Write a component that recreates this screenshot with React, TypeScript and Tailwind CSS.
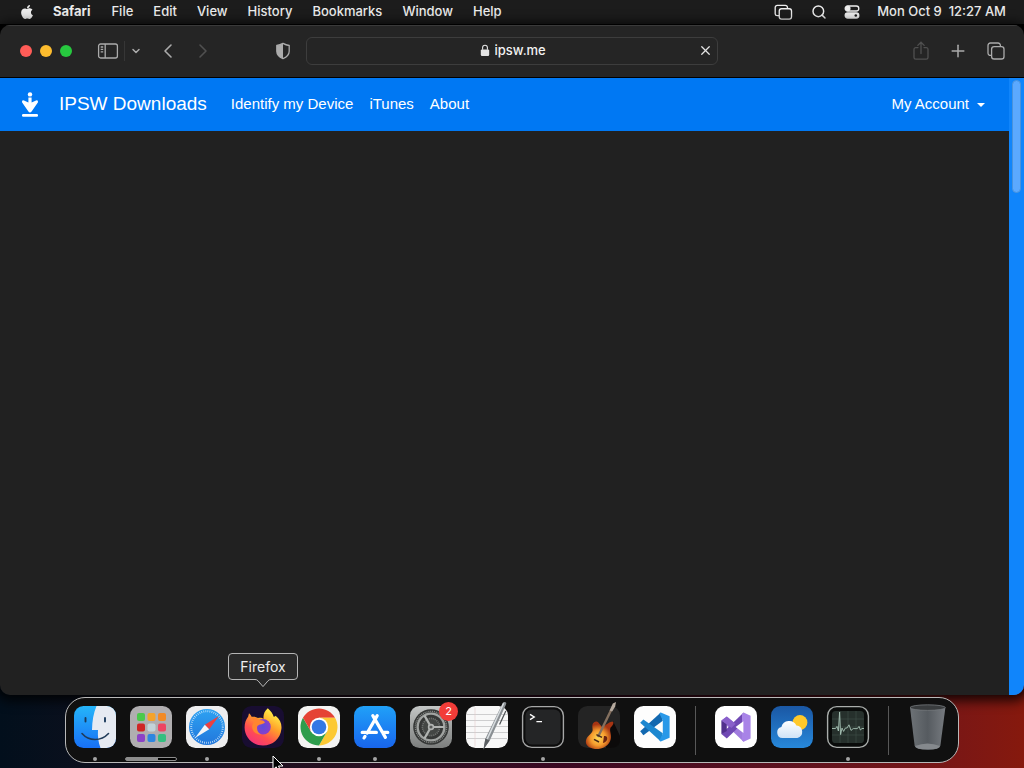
import type { ReactNode } from "react";
import { ChevronDown, ChevronLeft, ChevronRight, Plus, Search, X } from "lucide-react";
import { FaApple } from "react-icons/fa";

const menus = ["File", "Edit", "View", "History", "Bookmarks", "Window", "Help"];

const pageLinks = ["Identify my Device", "iTunes", "About"];

const StackIcon = ({ className }: { className: string }) => (
  <svg viewBox="0 0 20 18" fill="none" stroke="currentColor" strokeWidth="1.4" className={className}>
    <rect x="5.5" y="5" width="13" height="11" rx="2.4" />
    <path d="M5.5 12.4H3.4A2.2 2.2 0 0 1 1.2 10.4V3.6A2.2 2.2 0 0 1 3.4 1.4H12A2.2 2.2 0 0 1 14.2 3.6V5" />
  </svg>
);

const TabsIcon = () => (
  <svg viewBox="0 0 20 20" fill="none" stroke="currentColor" strokeWidth="1.3" className="size-5">
    <rect x="5.6" y="5.6" width="12.4" height="12.4" rx="2.6" />
    <path d="M5.6 14.4H4.4A2.4 2.4 0 0 1 2 12V4.4A2.4 2.4 0 0 1 4.4 2H12A2.4 2.4 0 0 1 14.4 4.4V5.6" />
  </svg>
);

const ControlCenterIcon = () => (
  <svg viewBox="0 0 16 14" className="h-3.5 w-4" fill="none" stroke="currentColor" strokeWidth="1.3">
    <rect x="1.2" y="1" width="13.6" height="5" rx="2.5" />
    <circle cx="3.9" cy="3.5" r="2" fill="currentColor" />
    <rect x="1.2" y="8" width="13.6" height="5" rx="2.5" fill="currentColor" />
    <circle cx="11.8" cy="10.5" r="1.3" fill="#1c1c1c" stroke="none" />
  </svg>
);

const SidebarIcon = () => (
  <svg viewBox="0 0 22 18" className="h-[18px] w-[22px]" fill="none" stroke="currentColor" strokeWidth="1.3">
    <rect x="1.6" y="2" width="18.8" height="14" rx="2" />
    <path d="M8.2 2V16M3.7 5H6.2M3.7 7.4H6.2M3.7 9.8H6.2" />
  </svg>
);

const ShieldIcon = () => (
  <svg viewBox="0 0 16 18" className="h-[18px] w-4">
    <path d="M8 1.4C10 2.6 12.2 3.3 14.2 3.5V9.2C14.2 12.8 11.6 15 8 16.6C4.4 15 1.8 12.8 1.8 9.2V3.5C3.8 3.3 6 2.6 8 1.4Z" fill="none" stroke="currentColor" strokeWidth="1.3" />
    <path d="M8 1.4V16.6C4.4 15 1.8 12.8 1.8 9.2V3.5C3.8 3.3 6 2.6 8 1.4Z" fill="currentColor" />
  </svg>
);

const LockIcon = () => (
  <svg viewBox="0 0 10 13" className="h-[13px] w-2.5">
    <rect x="0.8" y="5.4" width="8.4" height="6.6" rx="1.2" fill="currentColor" />
    <path d="M2.6 5.8V3.6a2.4 2.4 0 0 1 4.8 0V5.8" fill="none" stroke="currentColor" strokeWidth="1.1" />
  </svg>
);

const ShareIcon = () => (
  <svg viewBox="0 0 18 20" className="h-5 w-[18px]" fill="none" stroke="currentColor" strokeWidth="1.3" strokeLinecap="round">
    <path d="M6 6.6H3.8A1.8 1.8 0 0 0 2 8.4V16.4A1.8 1.8 0 0 0 3.8 18.2H14.2A1.8 1.8 0 0 0 16 16.4V8.4A1.8 1.8 0 0 0 14.2 6.6H12M9 12.6V1.4M5.8 4.4L9 1.2L12.2 4.4" />
  </svg>
);

const DownloadLogo = () => (
  <svg viewBox="0 0 18 26" className="h-[26px] w-[18px]" fill="white">
    <circle cx="9" cy="2.4" r="2.2" />
    <path d="M7.4 5.4H10.6V10.4L15 8.4Q17.4 7.8 17 10.2L10.6 19.6Q9 21.4 7.4 19.6L1 10.2Q0.6 7.8 3 8.4L7.4 10.4Z" />
    <rect x="1" y="22" width="16" height="2.8" rx="1.2" />
  </svg>
);

const Icon = ({ children }: { children: ReactNode }) => (
  <svg viewBox="0 0 42 42" className="size-[42px] overflow-visible">
    {children}
  </svg>
);

const FinderIcon = () => (
  <Icon>
    <defs>
      <linearGradient id="finder" x2="0" y2="1">
        <stop stopColor="#25b5fa" />
        <stop offset="1" stopColor="#1870f5" />
      </linearGradient>
      <clipPath id="finderClip">
        <rect width="42" height="42" rx="9.5" />
      </clipPath>
    </defs>
    <g clipPath="url(#finderClip)">
      <rect width="42" height="42" fill="url(#finder)" />
      <path d="M22.5 0C19.5 7 18.2 15 18 24H24C23.6 30 24.2 36 26.5 42H42V0Z" fill="#e6eaf2" />
    </g>
    <path d="M11.5 12V15.5M31 12V15.5" stroke="#1b3a5c" strokeWidth="1.9" strokeLinecap="round" />
    <path d="M8 27.5C15 35.5 27 35.5 34.5 27.5" fill="none" stroke="#203b59" strokeWidth="1.6" strokeLinecap="round" />
  </Icon>
);

const tiles = ["#4bc94b", "#f4a32a", "#f28a25", "#cf2525", "#c3d3d8", "#ee4562", "#8c43c6", "#2e86e0", "#34bf80"];

const LaunchpadIcon = () => (
  <Icon>
    <rect width="42" height="42" rx="9.5" fill="#b0aeb0" />
    {tiles.map((color, i) => (
      <rect key={color} x={7 + (i % 3) * 10.5} y={7 + Math.floor(i / 3) * 10.5} width="8" height="8" rx="2" fill={color} />
    ))}
  </Icon>
);

const SafariIcon = () => (
  <Icon>
    <defs>
      <linearGradient id="safari" x2="0" y2="1">
        <stop stopColor="#2da2f2" />
        <stop offset="1" stopColor="#2277dc" />
      </linearGradient>
    </defs>
    <rect width="42" height="42" rx="9.5" fill="#eeeeef" />
    <circle cx="21" cy="21" r="18" fill="url(#safari)" />
    <circle cx="21" cy="21" r="15.8" fill="none" stroke="#d5ebfc" strokeWidth="2" strokeDasharray="0.7 1.37" />
    <path d="M33 10L18.8 18.8L23.2 23.2Z" fill="#ec4040" />
    <path d="M9 32L18.8 18.8L23.2 23.2Z" fill="#f4f5f7" />
  </Icon>
);

const FirefoxIcon = () => (
  <Icon>
    <defs>
      <linearGradient id="fox" x1="0.85" y1="0.05" x2="0.25" y2="1">
        <stop offset="0.1" stopColor="#ffe743" />
        <stop offset="0.4" stopColor="#ffa02a" />
        <stop offset="0.7" stopColor="#ff4f50" />
        <stop offset="1" stopColor="#f5307c" />
      </linearGradient>
      <radialGradient id="globe">
        <stop stopColor="#5b4bdc" />
        <stop offset="1" stopColor="#8a3fca" />
      </radialGradient>
    </defs>
    <rect width="42" height="42" rx="9.5" fill="#180d31" />
    <path d="M25.8 2.2C29 5 31 8 31.7 10.8C33 11 33.6 9.8 33.6 9.8C38 13.4 40 18 39.4 23C38.4 33 30.6 39.5 21 39.5C10.6 39.5 2.6 31.4 2.6 21.6C2.6 17.4 3.8 13.6 6.2 10.6L7 7.2C8 8 9 9.4 9.6 10.8C11.8 10.4 14 10.8 16 12C18.6 11.4 20.4 12 21.6 12.8C21 9 22.4 5 25.8 2.2Z" fill="url(#fox)" />
    <circle cx="21" cy="20.8" r="7.8" fill="url(#globe)" />
    <path d="M9.5 12C12.5 11 15.8 12 17.4 14C19.8 14 22.4 14.8 23 16.6C21.4 18.4 17.6 18 15.4 20C14.2 23.4 16 27 19.4 28.6C14.8 28.6 11.4 26.4 10.5 23C9.4 19.2 11.2 17 12.6 15.8Z" fill="#ff852f" />
  </Icon>
);

const ChromeIcon = () => (
  <Icon>
    <rect width="42" height="42" rx="9.5" fill="#f3f3f2" />
    <path d="M21 21L4.98 11.75A18.5 18.5 0 0 1 37.02 11.75H21Z" fill="#e54335" />
    <path d="M21 11.75H37.02A18.5 18.5 0 0 1 21 39.5L29 25.6Z" fill="#fcc934" />
    <path d="M4.98 11.75L13 25.6L21 30L29 25.6L21 39.5A18.5 18.5 0 0 1 4.98 11.75Z" fill="#2e9d4c" />
    <path d="M21 21L13 25.6L4.98 11.75H21Z" fill="#e54335" />
    <circle cx="21" cy="21" r="9.2" fill="#fff" />
    <circle cx="21" cy="21" r="7.3" fill="#3478e5" />
  </Icon>
);

const AppStoreIcon = () => (
  <Icon>
    <defs>
      <linearGradient id="store" x2="0" y2="1">
        <stop stopColor="#20a1f8" />
        <stop offset="1" stopColor="#1865ed" />
      </linearGradient>
    </defs>
    <rect width="42" height="42" rx="9.5" fill="url(#store)" />
    <path d="M18.8 9.6L31.4 31.4M23.2 9.6L13.2 27M8.2 26.4H22.4M28.6 26.4H33.8M11 30.4L10 32" fill="none" stroke="#fff" strokeWidth="3.2" strokeLinecap="round" />
  </Icon>
);

const SettingsIcon = () => (
  <Icon>
    <defs>
      <linearGradient id="settings" x2="0" y2="1">
        <stop stopColor="#c3c6c5" />
        <stop offset="1" stopColor="#7c7e7d" />
      </linearGradient>
    </defs>
    <rect width="42" height="42" rx="9.5" fill="url(#settings)" />
    <circle cx="21" cy="21" r="17.8" fill="#353736" />
    <circle cx="21" cy="21" r="15.6" fill="none" stroke="#858886" strokeWidth="1.4" strokeDasharray="1 0.9" />
    <circle cx="21" cy="21" r="13.4" fill="none" stroke="#a0a3a1" strokeWidth="2.4" />
    <circle cx="21" cy="21" r="8.6" fill="#434644" stroke="#6f7270" strokeWidth="1.6" strokeDasharray="1.2 0.8" />
    <path d="M21 21L14.5 9.6M21 21H34M21 21L14.5 32.4" stroke="#b0b3b1" strokeWidth="2.2" />
    <circle cx="21" cy="21" r="2.4" fill="#555856" stroke="#b0b3b1" strokeWidth="1.6" />
  </Icon>
);

const TextEditIcon = () => (
  <Icon>
    <rect width="42" height="42" rx="9.5" fill="#f8f8f8" />
    <path d="M1 8.5H41M0 14.5H42M0 20.5H42M0 26.5H42M1 32.5H41" stroke="#c8c8ca" strokeWidth="0.9" />
    <path d="M9 1.5V40.5" stroke="#e3c9c9" strokeWidth="0.6" />
    <path d="M37 -3.6C39.4 -4.8 41 -3.6 40 -1.4L23.8 34.6L17.4 43.6L19.4 32.4Z" fill="#8b9094" />
    <path d="M37.6 -2.8L21 33.4" stroke="#d8dde0" strokeWidth="1.5" />
    <path d="M39.8 5L33.6 18.6" stroke="#4a4e51" strokeWidth="1.2" />
    <path d="M19.4 32.6L17.4 43.6L23.6 34.6Z" fill="#5b5f62" />
  </Icon>
);

const TerminalIcon = () => (
  <Icon>
    <rect x="0.6" y="0.6" width="40.8" height="40.8" rx="9.2" fill="#0c0c0c" stroke="#a6a7a7" strokeWidth="1.4" />
    <rect x="3.4" y="3.4" width="35.2" height="35.2" rx="6.5" fill="#242526" />
    <path d="M8 8.4L12.2 11L8 13.6M14.4 15.6H20" fill="none" stroke="#fff" strokeWidth="1.4" />
  </Icon>
);

const GarageBandIcon = () => (
  <Icon>
    <defs>
      <radialGradient id="guitar" cx="0.45" cy="0.6">
        <stop stopColor="#ffd955" />
        <stop offset="0.55" stopColor="#f59a2c" />
        <stop offset="1" stopColor="#a63412" />
      </radialGradient>
    </defs>
    <rect width="42" height="42" rx="9.5" fill="#242424" />
    <path d="M27 32L35 15L42 30V36Q40 42 32 42H28Z" fill="#0c0a0a" />
    <path d="M14.4 19C15 16 18.4 14.4 20.4 16.4L24 21C27 20.4 30 16 34.4 15.4C36.8 16.4 34.6 19.6 32.6 21.4C31 24.4 33.8 28 32.8 33C31 40.2 24 43.4 17 43C10.4 42.4 6.6 38.4 8.2 33.6C9.8 29 13.8 28.4 14.6 24.6C14.8 22.6 14 21 14.4 19Z" fill="url(#guitar)" />
    <path d="M20 31L33.4 3.4" stroke="#84705f" strokeWidth="2.4" />
    <path d="M31.6 4.4L34.8 -2.6L38 -4L37.2 0.4L34.2 5.6Z" fill="#b5a99d" />
    <path d="M16 33.4L21 36M18.4 28.6L24 31.4" stroke="#4a2a1a" strokeWidth="1.6" />
    <path d="M26 30C31 29 30 36 25 37Z" fill="#6b2411" />
  </Icon>
);

const VsCodeIcon = () => (
  <Icon>
    <rect width="42" height="42" rx="9.5" fill="#fdfdfd" />
    <path d="M6.2 25.2L26.8 6.4L28.8 14.8L9.4 29.2Z" fill="#1268b0" />
    <path d="M6.2 16.8L9.4 13.6L28.8 27.2L26.8 35.6Z" fill="#1c87d0" />
    <path d="M26.8 6.4L35.6 10.2V31.8L26.8 35.6L25.4 34.6L28.8 27.6V14.4L25.4 7.4Z" fill="#2998e8" />
  </Icon>
);

const VisualStudioIcon = () => (
  <Icon>
    <rect width="42" height="42" rx="9.5" fill="#fff" />
    <path d="M6.4 14.4L11.8 10.6L32 27.4L28.6 35.8Z" fill="#a07cde" />
    <path d="M6.4 28L28.6 6.4L29 16L11.8 32.4Z" fill="#7049b4" />
    <path d="M6.4 14.4L11.8 17.4V25L6.4 28Z" fill="#51308d" />
    <path d="M28.6 6.4L35.6 9.8V32.4L28.6 35.8L27 34.4V8Z" fill="#a883e7" />
    <path d="M28.4 15.2V27L20.6 21Z" fill="#fff" />
    <path d="M11.8 10.6L20.6 17.8L16.4 22L6.4 14.4Z" fill="#8960ca" />
  </Icon>
);

const WeatherIcon = () => (
  <Icon>
    <defs>
      <linearGradient id="sky" x2="0" y2="1">
        <stop stopColor="#1a57a4" />
        <stop offset="1" stopColor="#2788da" />
      </linearGradient>
      <linearGradient id="cloud" x2="0" y2="1">
        <stop stopColor="#fff" />
        <stop offset="1" stopColor="#cfe3f7" />
      </linearGradient>
    </defs>
    <rect width="42" height="42" rx="9.5" fill="url(#sky)" />
    <circle cx="29" cy="16.4" r="7.4" fill="#ffc92b" />
    <path d="M11.4 32A5.6 5.6 0 0 1 10.4 21A8 8 0 0 1 25.4 19.6A6.3 6.3 0 0 1 26.4 32Z" fill="url(#cloud)" />
  </Icon>
);

const ActivityIcon = () => (
  <Icon>
    <rect x="0.6" y="0.6" width="40.8" height="40.8" rx="9.2" fill="#090b0a" stroke="#a9adab" strokeWidth="1.4" />
    <rect x="5" y="5" width="32" height="32" rx="3.6" fill="#26302c" />
    <path d="M5 13H37M5 21H37M5 29H37M13 5V37M21 5V37M29 5V37" stroke="#44554e" strokeWidth="0.5" />
    <path d="M5 22.5H8.6L10 20.4L11.4 25L12.6 6L13.6 28.6L15 22L16.6 25.4L18.4 22H20L22 18.8L24 24.4L26.2 22.6H30.4L32 20.4L33.4 24L35 22.5H37" fill="none" stroke="#a7c3b6" strokeWidth="0.9" />
  </Icon>
);

const TrashIcon = () => (
  <Icon>
    <defs>
      <linearGradient id="bin">
        <stop stopColor="#6d7276" />
        <stop offset="0.5" stopColor="#565b60" />
        <stop offset="1" stopColor="#777b80" />
      </linearGradient>
    </defs>
    <path d="M2 1.6L6.6 39.4Q7.4 43.8 20 43.8Q31.6 43.8 32.4 39.4L37.4 1.6Z" fill="url(#bin)" />
    <ellipse cx="19.7" cy="1.6" rx="17.7" ry="2.8" fill="#393c3e" stroke="#75797c" strokeWidth="0.8" />
    <path d="M7 40Q19.6 35 32 40Q31 43.6 20 43.6Q8 43.6 7 40Z" fill="#85898d" />
  </Icon>
);

interface DockItemProps {
  label: string;
  running?: boolean;
  children: ReactNode;
}

const DockItem = ({ label, running, children }: DockItemProps) => (
  <div className="relative size-[42px]">
    <button aria-label={label} className="block">
      {children}
    </button>
    {running && (
      <span className="absolute top-[51px] left-1/2 size-1 -translate-x-1/2 rounded-full bg-[#a5a5a5]" />
    )}
  </div>
);

const DockTooltip = ({ text }: { text: string }) => (
  <div className="absolute bottom-[74px] left-1/2 z-10 flex h-[27px] w-[70px] -translate-x-1/2 items-center justify-center rounded-[4px] border border-[#b5b5b5] bg-[#292929] text-sm text-[#eeeeee]">
    {text}
    <svg viewBox="0 0 16 9" className="absolute top-[25px] h-[9px] w-4">
      <path d="M0 0H16L8 8Z" fill="#292929" />
      <path d="M0 0.5Q2 0.5 3 1.8L8 7.6L13 1.8Q14 0.5 16 0.5" fill="none" stroke="#b5b5b5" />
    </svg>
  </div>
);

const DockDivider = () => <span className="mx-[5px] h-[49px] w-px self-start bg-[#585858]" />;

const MenuBar = () => (
  <header className="flex h-6 items-center justify-between bg-[#1c1c1c] pr-[18px] pl-5 text-[13px] font-medium text-[#ededed]">
    <nav aria-label="Menu bar" className="flex items-center gap-5">
      <button aria-label="Apple menu">
        <FaApple size={16} className="w-3.5" />
      </button>
      <button className="mr-px -ml-px font-bold">Safari</button>
      {menus.map((menu) => (
        <button key={menu}>{menu}</button>
      ))}
    </nav>
    <div className="flex items-center">
      <button aria-label="Stage Manager" className="mr-[18px]">
        <StackIcon className="h-[17px] w-[19px]" />
      </button>
      <button aria-label="Spotlight" className="mr-[17px]">
        <Search size={16} strokeWidth={2.2} />
      </button>
      <button aria-label="Control Center" className="mr-[17px]">
        <ControlCenterIcon />
      </button>
      <time className="whitespace-pre">Mon Oct 9  12:27 AM</time>
    </div>
  </header>
);

const Toolbar = () => (
  <div className="grid h-[53px] grid-cols-[1fr_412px_1fr] items-center border-t border-b border-t-[#3a3a3a] border-b-black bg-[#252525] pb-0.5 text-[#ababab]">
    <div className="flex items-center justify-between pr-[15px] pl-5">
      <div className="flex items-center">
        <div className="flex gap-2">
          <button aria-label="Close" className="size-3 rounded-full bg-[#ff5c57]" />
          <button aria-label="Minimize" className="size-3 rounded-full bg-[#fdbc2e]" />
          <button aria-label="Zoom" className="size-3 rounded-full bg-[#27c83f]" />
        </div>
        <button aria-label="Sidebar" className="ml-[25px]">
          <SidebarIcon />
        </button>
        <span className="mx-[5px] h-5 w-px bg-[#363636]" />
        <button aria-label="Tab groups">
          <ChevronDown size={12} strokeWidth={3} />
        </button>
        <button aria-label="Back" className="ml-[14px]">
          <ChevronLeft size={24} strokeWidth={1.6} />
        </button>
        <button aria-label="Forward" className="ml-[11px] text-[#505050]" disabled>
          <ChevronRight size={24} strokeWidth={1.6} />
        </button>
      </div>
      <button aria-label="Privacy report">
        <ShieldIcon />
      </button>
    </div>
    <div className="flex h-7 items-center justify-between rounded-md border border-[#3d3d3d] px-1 text-[#e4e4e4]">
      <span className="w-4" />
      <label className="flex items-center gap-[5px]">
        <LockIcon />
        <input
          aria-label="Address"
          defaultValue="ipsw.me"
          className="w-[51px] bg-transparent text-[13px] font-medium text-[#f2f2f2] outline-none"
        />
      </label>
      <button aria-label="Stop loading">
        <X size={15} strokeWidth={2} />
      </button>
    </div>
    <div className="flex items-center justify-end gap-[18px] pr-[18px]">
      <button aria-label="Share" className="text-[#505050]" disabled>
        <ShareIcon />
      </button>
      <button aria-label="New tab">
        <Plus size={20} strokeWidth={1.8} />
      </button>
      <button aria-label="Tab overview">
        <TabsIcon />
      </button>
    </div>
  </div>
);

const WebPage = () => (
  <div className="flex min-h-0 flex-1">
    <div className="flex flex-1 flex-col bg-[#212121]">
      <nav className="flex h-[53px] items-center justify-between bg-[#0078f3] pr-6 pl-[21px] font-['Liberation_Sans',Arial,sans-serif] text-[15px] text-white">
        <div className="flex items-center">
          <a href="#" className="flex items-center gap-5 text-[19px]">
            <DownloadLogo />
            IPSW Downloads
          </a>
          <div className="ml-6 flex items-center gap-4">
            {pageLinks.map((link) => (
              <a key={link} href="#">
                {link}
              </a>
            ))}
          </div>
        </div>
        <button className="flex items-center gap-2">
          My Account
          <span className="border-x-4 border-t-4 border-x-transparent border-t-white" />
        </button>
      </nav>
      <main className="flex-1" />
    </div>
    <div className="w-[15px] bg-[#1085fb] px-[3px] pt-0.5">
      <div className="h-[113px] rounded-full border border-[#4a93dc] bg-[#5ba9ff]" />
    </div>
  </div>
);

const Dock = () => (
  <nav aria-label="Dock" className="flex h-[66px] gap-3.5 self-center rounded-[20px] border border-[#b9b9b9] bg-[#101010] p-2">
    <DockItem label="Finder" running>
      <FinderIcon />
    </DockItem>
    <div className="relative">
      <DockItem label="Launchpad">
        <LaunchpadIcon />
      </DockItem>
      <div className="absolute top-[51px] left-1/2 h-1 w-[52px] -translate-x-1/2 rounded-sm border border-[#8d8d8d] bg-black">
        <div className="h-full w-8 bg-[#8d8d8d]" />
      </div>
    </div>
    <DockItem label="Safari" running>
      <SafariIcon />
    </DockItem>
    <div className="relative">
      <DockTooltip text="Firefox" />
      <DockItem label="Firefox">
        <FirefoxIcon />
      </DockItem>
      <svg viewBox="0 0 12 18" className="absolute top-[49px] left-[30px] z-10 h-[18px] w-3">
        <path d="M1 1V14.6L4.2 11.8L6.6 17L8.8 16L6.5 11H11Z" fill="#000" stroke="#fff" strokeWidth="1" />
      </svg>
    </div>
    <DockItem label="Google Chrome" running>
      <ChromeIcon />
    </DockItem>
    <DockItem label="App Store" running>
      <AppStoreIcon />
    </DockItem>
    <div className="relative">
      <DockItem label="System Settings">
        <SettingsIcon />
      </DockItem>
      <span className="absolute -top-1 -right-1.5 flex size-[19px] items-center justify-center rounded-full bg-[#f23c38] text-[11px] text-white">
        2
      </span>
    </div>
    <DockItem label="TextEdit">
      <TextEditIcon />
    </DockItem>
    <DockItem label="Terminal" running>
      <TerminalIcon />
    </DockItem>
    <DockItem label="GarageBand">
      <GarageBandIcon />
    </DockItem>
    <DockItem label="Visual Studio Code">
      <VsCodeIcon />
    </DockItem>
    <DockDivider />
    <DockItem label="Visual Studio">
      <VisualStudioIcon />
    </DockItem>
    <DockItem label="Weather">
      <WeatherIcon />
    </DockItem>
    <DockItem label="Activity Monitor" running>
      <ActivityIcon />
    </DockItem>
    <DockDivider />
    <DockItem label="Trash">
      <TrashIcon />
    </DockItem>
  </nav>
);

export default function App() {
  return (
    <div className="flex h-screen flex-col overflow-hidden bg-black bg-linear-to-r from-[#020f1c] via-[#3b0822] via-55% to-[#86190d] font-['Inter','Liberation_Sans',sans-serif]">
      <MenuBar />
      <div className="flex flex-1 flex-col bg-linear-to-b from-black from-95% to-transparent pt-px pb-0.5">
        <section className="flex flex-1 flex-col overflow-hidden rounded-[10px] shadow-[0_2px_12px_4px_rgba(0,0,0,0.8)]">
          <Toolbar />
          <WebPage />
        </section>
      </div>
      <div className="mb-[5px] flex flex-col">
        <Dock />
      </div>
    </div>
  );
}
